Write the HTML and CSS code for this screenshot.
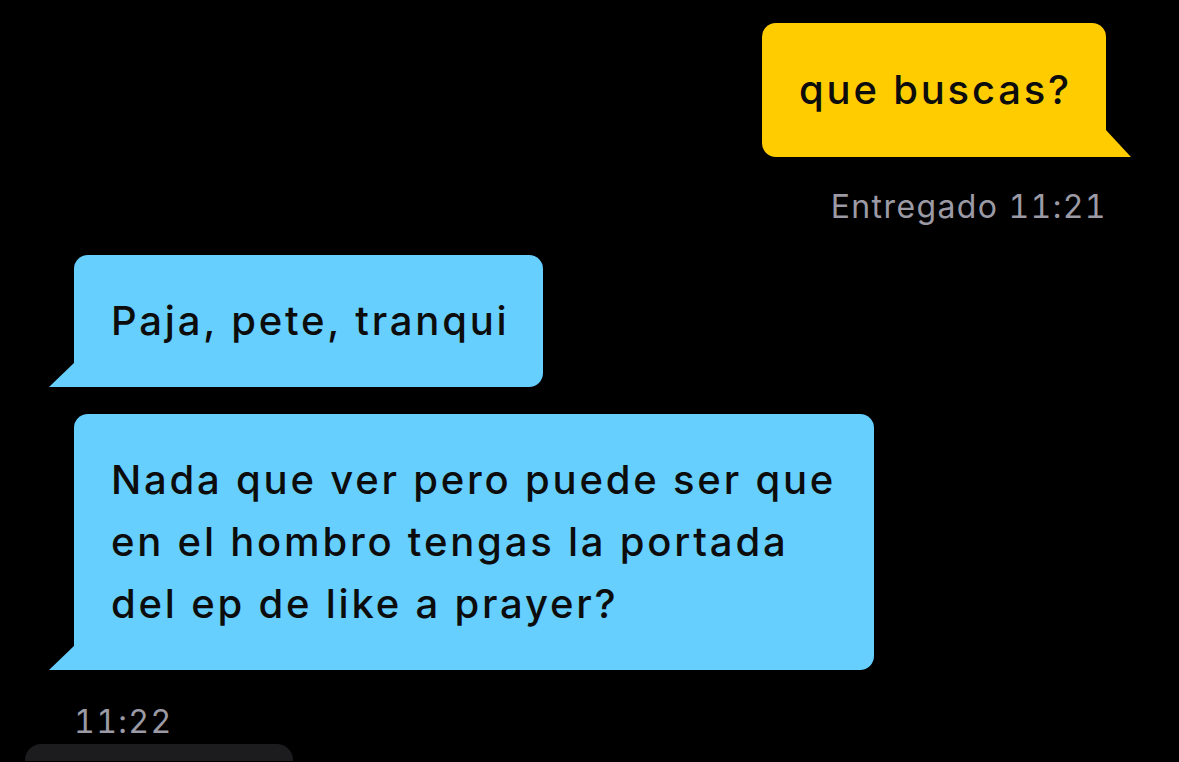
FILE: index.html
```html
<!DOCTYPE html>
<html lang="es">
<head>
<meta charset="utf-8">
<title>Chat</title>
<link rel="stylesheet" href="styles.css">
</head>
<body>
<main class="chat">
  <div class="msg msg-out">
    <div class="bubble bubble-out">que buscas?</div>
    <div class="meta meta-out">Entregado 11:21</div>
  </div>
  <div class="msg msg-in">
    <div class="bubble bubble-in">Paja, pete, tranqui</div>
    <div class="bubble bubble-in bubble-long">Nada que ver pero puede ser que en el hombro tengas la portada del ep de like a prayer?</div>
    <div class="meta meta-in">11:22</div>
  </div>
  <div class="composer"></div>
</main>
</body>
</html>
```
FILE: styles.css
```css
html, body {
  margin: 0;
  padding: 0;
  background: #000;
  height: 100%;
  overflow: hidden;
}
body {
  font-family: Inter, "Noto Sans", sans-serif;
  color: #0c0c0c;
}
.chat {
  display: flex;
  flex-direction: column;
  padding-top: 23px;
}
.msg {
  display: flex;
  flex-direction: column;
}
.msg-out {
  align-items: flex-end;
  padding-right: 73px;
}
.msg-in {
  align-items: flex-start;
  padding-left: 74px;
  margin-top: 31px;
  gap: 27px;
}
.bubble {
  position: relative;
  font-size: 40px;
  font-weight: 500;
  letter-spacing: 2.8px;
  line-height: 62px;
  padding: 36px 34px 36px 37px;
  box-sizing: border-box;
}
.bubble-out {
  background: #ffcc00;
  border-radius: 14px 14px 0 14px;
}
.bubble-out::after {
  content: "";
  position: absolute;
  right: -25px;
  bottom: 0;
  width: 26px;
  height: 28px;
  background: #ffcc00;
  clip-path: polygon(0 0, 100% 100%, 0 100%);
}
.bubble-in {
  background: #66cffe;
  border-radius: 14px 14px 14px 0;
  padding-top: 35px;
  padding-bottom: 35px;
}
.bubble-in::after {
  content: "";
  position: absolute;
  left: -25px;
  bottom: 0;
  width: 26px;
  height: 25px;
  background: #66cffe;
  clip-path: polygon(100% 0, 100% 100%, 0 100%);
}
.bubble-long {
  max-width: 800px;
}
.meta {
  color: #9b9aa5;
  font-size: 32px;
  letter-spacing: 1.4px;
  line-height: 34px;
  font-variant-numeric: tabular-nums;
}
.meta-out {
  margin-top: 33px;
  margin-right: -1px;
}
.meta-in {
  margin-top: 8px;
}
.composer {
  margin: 5px 0 0 25px;
  width: 268px;
  height: 17px;
  background: #1c1c1e;
  border-radius: 16px 16px 0 0;
}
```
